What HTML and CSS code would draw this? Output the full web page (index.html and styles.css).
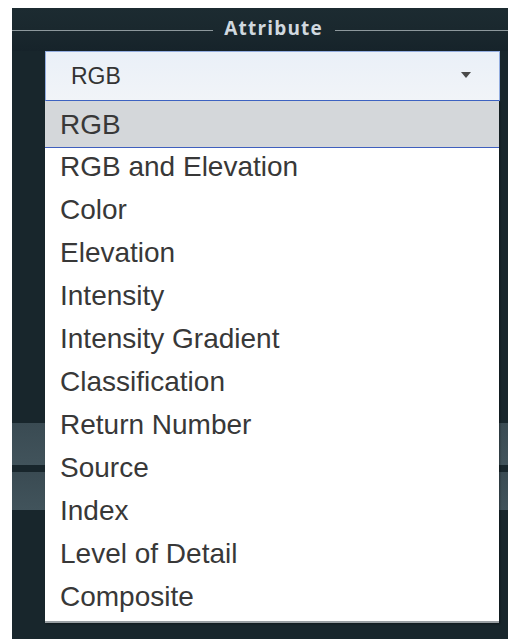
FILE: index.html
```html
<!DOCTYPE html>
<html lang="en">
<head>
<meta charset="utf-8">
<title>Attribute</title>
<link rel="stylesheet" href="styles.css">
</head>
<body>
<div class="panel">
  <div class="legend">
    <span class="legend-line"></span>
    <span class="legend-title">Attribute</span>
    <span class="legend-line legend-line-right"></span>
  </div>
  <div class="field">
    <div class="select">
      <span class="select-value">RGB</span>
      <svg class="select-arrow" width="10" height="6" viewBox="0 0 10 6"><path d="M0 0H10L5 6Z" fill="#4a4a4a"/></svg>
    </div>
    <ul class="options">
      <li class="option option-selected">RGB</li>
      <li class="option">RGB and Elevation</li>
      <li class="option">Color</li>
      <li class="option">Elevation</li>
      <li class="option">Intensity</li>
      <li class="option">Intensity Gradient</li>
      <li class="option">Classification</li>
      <li class="option">Return Number</li>
      <li class="option">Source</li>
      <li class="option">Index</li>
      <li class="option">Level of Detail</li>
      <li class="option">Composite</li>
    </ul>
  </div>
  <div class="rows">
    <div class="row"></div>
    <div class="row"></div>
  </div>
</div>
</body>
</html>
```
FILE: styles.css
```css
html, body {
  margin: 0;
  padding: 0;
  background: #ffffff;
}

body {
  padding: 8px 0 0 12px;
  font-family: "Liberation Sans", Arial, sans-serif;
}

.panel {
  height: 631px;
  background: #18262c;
  display: flex;
  flex-direction: column;
}

/* fieldset-style heading with rules on both sides */
.legend {
  height: 43px;
  display: flex;
  align-items: flex-start;
  background: linear-gradient(#1c2b31, #1a282e 50%, #16232a);
}

.legend-line {
  flex: 1;
  height: 1px;
  margin-top: 22px;
  background: #8d989c;
}

.legend-line-right {
  flex: 0 0 173px;
}

.legend-title {
  padding: 9px 12px 0 11px;
  font-family: "Open Sans", "DejaVu Sans", sans-serif;
  font-weight: 700;
  font-size: 19px;
  letter-spacing: 1.2px;
  line-height: 22px;
  color: #d0d8df;
}

.field {
  position: relative;
  margin: 0 8px 0 33px;
}

.select {
  height: 48px;
  border: 1px solid #93ade0;
  border-bottom-color: #3f66c6;
  background: linear-gradient(#eaf0f8, #f1f4f8);
  display: flex;
  align-items: center;
  justify-content: space-between;
  padding: 0 28px 0 25px;
}

.select-value {
  font-size: 23px;
  line-height: 48px;
  color: #333333;
}

.select-arrow {
  display: block;
  margin-top: -2px;
}

/* open option list, drawn over the rows below */
.options {
  position: absolute;
  top: 100%;
  left: 0;
  right: 1px;
  margin: 0;
  padding: 0;
  list-style: none;
  background: #ffffff;
  border-bottom: 2px solid #9aa0a4;
  box-shadow: 1px 1px 2px rgba(0, 0, 0, 0.35);
  z-index: 2;
}

.option {
  padding: 0 0 5px 15px;
  font-size: 28px;
  line-height: 38px;
  color: #383838;
  white-space: nowrap;
}

.option-selected {
  padding-top: 5px;
  padding-bottom: 3px;
  background: #d4d7da;
  border-bottom: 1px solid #3f5fbe;
}

.rows {
  margin-top: 322px;
  display: flex;
  flex-direction: column;
  gap: 7px;
}

.row {
  height: 42px;
  background: linear-gradient(#3a4b53, #41535b);
}

.row + .row {
  height: 38px;
}
```
